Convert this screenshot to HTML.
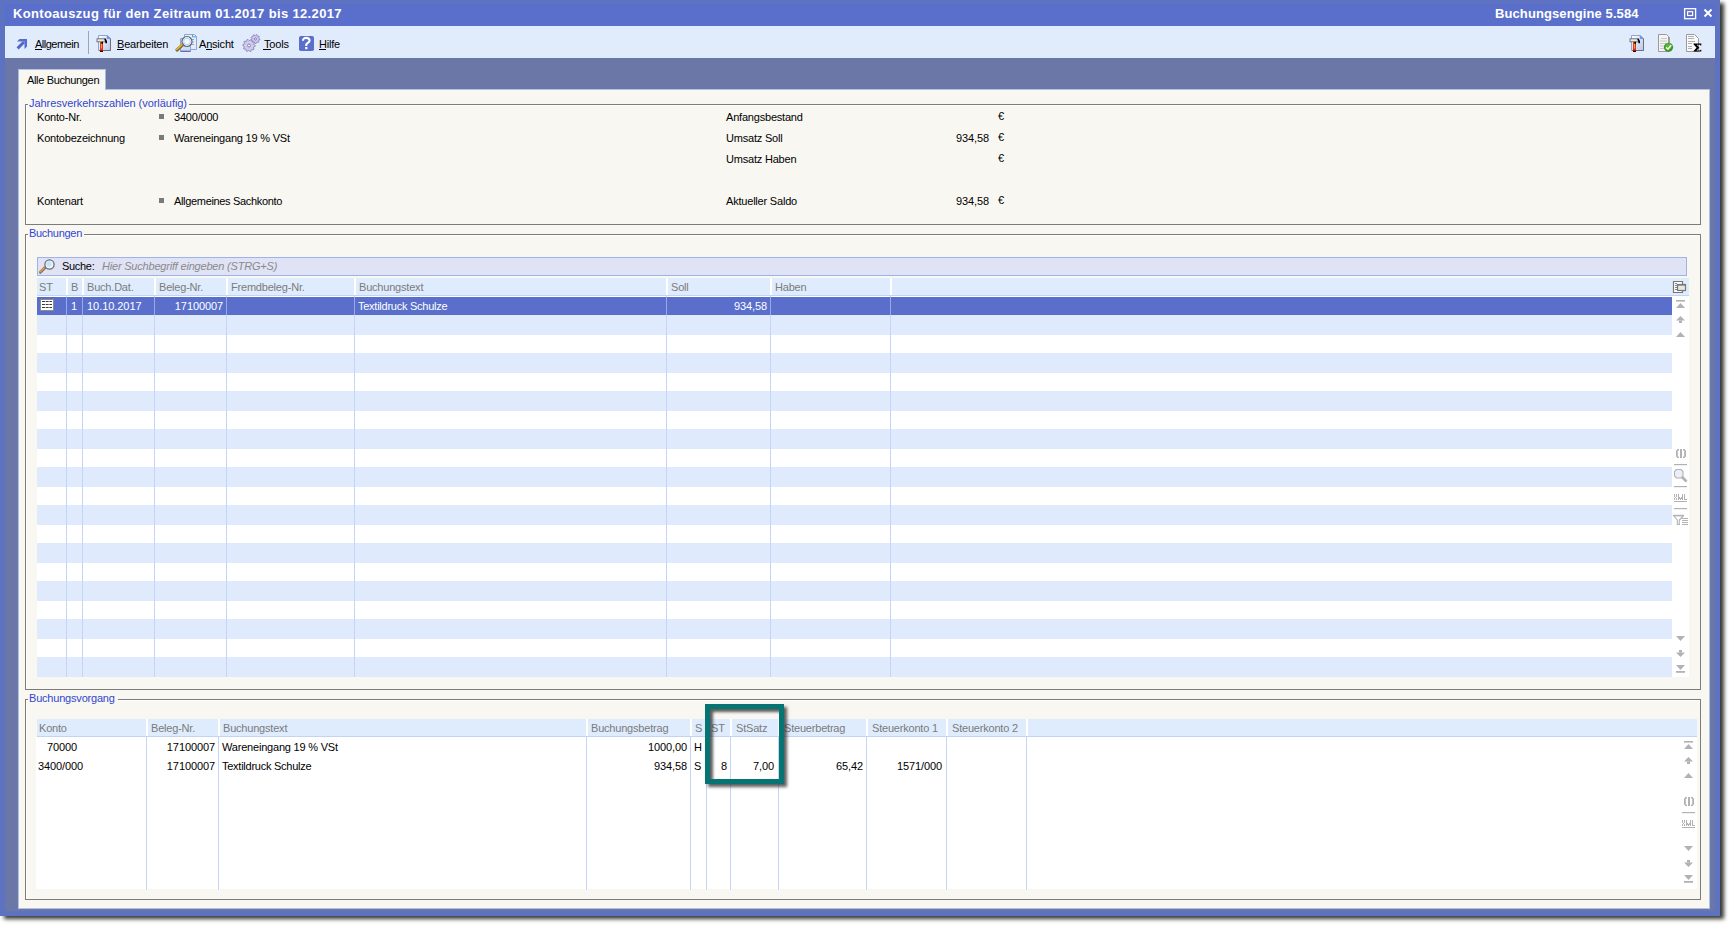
<!DOCTYPE html><html><head><meta charset="utf-8"><style>
*{margin:0;padding:0;box-sizing:border-box}
html,body{width:1730px;height:926px;overflow:hidden;background:#fff}
body{position:relative;font-family:'Liberation Sans', sans-serif;font-size:11px}
div{position:absolute}
.t{white-space:pre}
svg{position:absolute;overflow:visible}
</style></head><body><div style="left:0px;top:0px;width:1720px;height:916px;background:#5e72c2;box-shadow:4px 3px 4px rgba(20,20,15,.85)"></div>
<div style="left:5px;top:4px;width:1710px;height:22px;background:#5a6fcb"></div>
<div class="t" style="top:6px;font-size:13px;line-height:15px;color:#fff;font-weight:bold;letter-spacing:0.35px;left:13px;">Kontoauszug für den Zeitraum 01.2017 bis 12.2017</div>
<div class="t" style="top:6px;font-size:13px;line-height:15px;color:#fff;font-weight:bold;letter-spacing:0.1px;left:1495px;">Buchungsengine 5.584</div>
<svg style="left:1683px;top:8px" width="14" height="12"><rect x="1.6" y="0.7" width="11" height="10" fill="none" stroke="#fff" stroke-width="1.3"/><rect x="4.6" y="3.7" width="5" height="3.8" fill="none" stroke="#fff" stroke-width="1.2"/></svg>
<svg style="left:1703px;top:8px" width="10" height="10"><path d="M1.5 1.5 L8.5 8.5 M8.5 1.5 L1.5 8.5" stroke="#fff" stroke-width="1.9"/></svg>
<div style="left:5px;top:26px;width:1710px;height:32px;background:#e0ebfc"></div>
<div style="left:5px;top:58px;width:1710px;height:853px;background:#6a77a7"></div>
<svg style="left:14px;top:36px" width="16" height="16"><path d="M3.6 12.4 L10 6" stroke="#5068cc" stroke-width="2.9"/><path d="M3 5.5 L5.5 3 L13 3 L13 10.5 L10.5 13 L10.5 5.5 Z" fill="#566ccc"/></svg>
<div class="t" style="top:38px;font-size:11px;line-height:13px;color:#000;letter-spacing:-0.5px;left:35px;">Allgemein</div>
<div style="left:35px;top:49px;width:7px;height:1px;background:#000"></div>
<div style="left:88px;top:31px;width:1px;height:23px;background:#a0a4b0"></div>
<svg style="left:97px;top:35px" width="16" height="18">
<defs><linearGradient id="dg97" x1="0" y1="0" x2="1" y2="1"><stop offset="0" stop-color="#ffffff"/><stop offset="1" stop-color="#b8c4f0"/></linearGradient></defs>
<path d="M1.5 0.5 H10.5 L13.5 3.5 V15.5 H1.5 Z" fill="url(#dg97)" stroke="#8fa2dc" stroke-width="1"/>
<path d="M13.5 3.5 V15.5 H2" fill="none" stroke="#707070" stroke-width="1"/>
<path d="M10.2 0.8 L10.2 3.6 L13.4 3.6" fill="#5f8ee8" stroke="#5f8ee8" stroke-width="0.8"/>
<rect x="0" y="3.8" width="8.6" height="3" fill="#e8e8e8" stroke="#6c6c6c" stroke-width="0.9"/>
<path d="M7.5 4.2 Q9.3 4.5 9.3 8.2" stroke="#000" stroke-width="1.6" fill="none"/>
<rect x="3" y="7" width="3" height="9.8" fill="#e0300a"/>
<rect x="3.9" y="8.5" width="0.9" height="5" fill="#f0c040"/>
<rect x="4.5" y="6.8" width="1.5" height="2" fill="#000"/>
<rect x="3" y="15.6" width="3" height="1.4" fill="#300"/>
</svg>
<div class="t" style="top:38px;font-size:11px;line-height:13px;color:#000;letter-spacing:-0.2px;left:117px;">Bearbeiten</div>
<div style="left:117px;top:49px;width:7px;height:1px;background:#000"></div>
<svg style="left:175px;top:33px" width="24" height="20">
<path d="M9.5 1.5 H19.5 L21.5 3.5 V16.5 H9.5 Z" fill="#e4ecfa" stroke="#8ea6d8" stroke-width="1"/>
<path d="M17.5 1.8 L17.5 3.8 L21.2 3.8" fill="none" stroke="#4aa0c0" stroke-width="1"/>
<path d="M15 6.5 H19 M15 9 H19 M15 11.5 H19" stroke="#8ea6d8" stroke-width="1"/>
<path d="M5.5 5.5 H15.5 V18.3 H5.5 Z" fill="#cfdcf6" stroke="#8ea6d8" stroke-width="1"/>
<path d="M5.5 18.3 H15.5" stroke="#6a64a0" stroke-width="1.2"/>
<circle cx="12" cy="8.5" r="5" fill="#f4f8ff" stroke="#5e6a78" stroke-width="1.2"/>
<circle cx="12" cy="8.5" r="3.3" fill="none" stroke="#b8cdf0" stroke-width="1"/>
<path d="M2 17 L7.5 11.8" stroke="#6a6a50" stroke-width="3.2" stroke-linecap="round"/>
<path d="M1.8 16.4 L6.8 11.6" stroke="#f0b020" stroke-width="1.8" stroke-linecap="round"/>
</svg>
<div class="t" style="top:38px;font-size:11px;line-height:13px;color:#000;letter-spacing:-0.2px;left:199px;">Ansicht</div>
<div style="left:206px;top:49px;width:6px;height:1px;background:#000"></div>
<svg style="left:242px;top:34px" width="20" height="18"><polygon points="17.90,5.00 17.83,5.78 16.78,6.23 16.52,6.80 16.85,7.89 16.29,8.45 15.20,8.12 14.63,8.38 14.18,9.43 13.40,9.50 12.77,8.55 12.17,8.38 11.15,8.90 10.51,8.45 10.64,7.31 10.28,6.80 9.17,6.54 8.97,5.78 9.80,5.00 9.85,4.37 9.17,3.46 9.50,2.75 10.64,2.69 11.09,2.24 11.15,1.10 11.86,0.77 12.77,1.45 13.40,1.40 14.18,0.57 14.94,0.77 15.20,1.88 15.71,2.24 16.85,2.11 17.30,2.75 16.78,3.77 16.95,4.37" fill="#ccc8e8" stroke="#8078b8" stroke-width="0.8"/><circle cx="13.4" cy="5" r="1.08" fill="#f4f4ff" stroke="#8078b8" stroke-width="0.9"/><polygon points="13.20,11.50 13.12,12.47 11.72,13.03 11.42,13.75 12.02,15.14 11.38,15.88 9.92,15.51 9.25,15.92 8.92,17.40 7.97,17.62 7.00,16.46 6.22,16.40 5.08,17.40 4.19,17.02 4.08,15.51 3.49,15.01 1.98,15.14 1.48,14.31 2.28,13.03 2.10,12.28 0.80,11.50 0.88,10.53 2.28,9.97 2.58,9.25 1.98,7.86 2.62,7.12 4.08,7.49 4.75,7.08 5.08,5.60 6.03,5.38 7.00,6.54 7.78,6.60 8.92,5.60 9.81,5.98 9.92,7.49 10.51,7.99 12.02,7.86 12.52,8.69 11.72,9.97 11.90,10.72" fill="#d0cce8" stroke="#8078b8" stroke-width="0.8"/><circle cx="7" cy="11.5" r="1.49" fill="#f4f4ff" stroke="#8078b8" stroke-width="0.9"/></svg>
<div class="t" style="top:38px;font-size:11px;line-height:13px;color:#000;letter-spacing:-0.2px;left:264px;">Tools</div>
<div style="left:263px;top:49px;width:8px;height:1px;background:#000"></div>
<svg style="left:299px;top:36px" width="15" height="15"><rect x="0" y="0" width="15" height="15" rx="1.8" fill="#5a6fcc"/><path d="M4 4.8 C4 2.6 5.4 1.9 7.3 1.9 C9.4 1.9 10.6 3 10.6 4.6 C10.6 6.6 8.1 6.9 7.3 8.4 V10" fill="none" stroke="#fff" stroke-width="2.1"/><rect x="6.2" y="11" width="2.2" height="2.2" fill="#fff"/></svg>
<div class="t" style="top:38px;font-size:11px;line-height:13px;color:#000;letter-spacing:-0.2px;left:319px;">Hilfe</div>
<div style="left:319px;top:49px;width:7px;height:1px;background:#000"></div>
<svg style="left:1630px;top:35px" width="16" height="18">
<defs><linearGradient id="dg1630" x1="0" y1="0" x2="1" y2="1"><stop offset="0" stop-color="#ffffff"/><stop offset="1" stop-color="#b8c4f0"/></linearGradient></defs>
<path d="M1.5 0.5 H10.5 L13.5 3.5 V15.5 H1.5 Z" fill="url(#dg1630)" stroke="#8fa2dc" stroke-width="1"/>
<path d="M13.5 3.5 V15.5 H2" fill="none" stroke="#707070" stroke-width="1"/>
<path d="M10.2 0.8 L10.2 3.6 L13.4 3.6" fill="#5f8ee8" stroke="#5f8ee8" stroke-width="0.8"/>
<rect x="0" y="3.8" width="8.6" height="3" fill="#e8e8e8" stroke="#6c6c6c" stroke-width="0.9"/>
<path d="M7.5 4.2 Q9.3 4.5 9.3 8.2" stroke="#000" stroke-width="1.6" fill="none"/>
<rect x="3" y="7" width="3" height="9.8" fill="#e0300a"/>
<rect x="3.9" y="8.5" width="0.9" height="5" fill="#f0c040"/>
<rect x="4.5" y="6.8" width="1.5" height="2" fill="#000"/>
<rect x="3" y="15.6" width="3" height="1.4" fill="#300"/>
</svg>
<svg style="left:1657px;top:34px" width="18" height="19">
<path d="M1.5 0.5 H9.5 L11.5 2.5 V17.5 H1.5 Z" fill="#f4f4f4" stroke="#9a9a9a" stroke-width="1"/>
<path d="M12.5 3 V14" stroke="#a0a0a0" stroke-width="1"/>
<path d="M4 4.5 H10 M3 7 H10 M3 9.5 H9 M3 12 H8 M3 14.5 H8" stroke="#c8c8c8" stroke-width="1.2"/>
<circle cx="11.5" cy="13.3" r="4.6" fill="#3a9a20"/>
<circle cx="11.5" cy="12.3" r="3" fill="#66c040" opacity=".7"/>
<path d="M9 13.4 L10.9 15.2 L14.2 11.2" stroke="#fff" stroke-width="1.5" fill="none"/>
</svg>
<svg style="left:1685px;top:34px" width="19" height="19">
<path d="M1.5 0.5 H9.5 L13.5 4.5 V17.5 H1.5 Z" fill="#fafafa" stroke="#9a9a9a" stroke-width="1"/>
<path d="M3 2.5 H9 M3 4.5 H9 M3 7.5 H10 M3 9.5 H7 M3 12.5 H7 M3 14.5 H7" stroke="#b0b0b0" stroke-width="1"/>
<path d="M8.5 9.5 H16.3 V11.5 H15.5 L15 10.8 H11.8 L14.3 13.8 L11.5 16.6 H15 L15.5 15.8 H16.3 V17.6 H8.5 V16.9 L11.6 13.8 L8.5 10.3 Z" fill="#000"/>
</svg>
<div style="left:18px;top:89px;width:1692px;height:820px;background:#f8f7f2;border:1px solid #b0c2e6"></div>
<div style="left:18px;top:69px;width:88px;height:21px;background:#f8f7f2;border-top:1px solid #b6c4e4;border-left:1px solid #a8bade;border-right:1px solid #a8bade"></div>
<div class="t" style="top:74px;font-size:11px;line-height:13px;color:#000;letter-spacing:-0.35px;left:27px;">Alle Buchungen</div>
<div style="left:25px;top:104px;width:1676px;height:121px;border:1px solid #7c7c7c"></div>
<div style="left:26px;top:105px;width:1674px;height:119px;border-left:1px solid #fff;border-top:1px solid #fff"></div>
<div style="left:28px;top:96px;width:161px;height:14px;background:#f8f7f2"></div>
<div class="t" style="top:97px;font-size:11px;line-height:13px;color:#3246d0;letter-spacing:-0.05px;left:29px;">Jahresverkehrszahlen (vorläufig)</div>
<div style="left:25px;top:234px;width:1676px;height:456px;border:1px solid #7c7c7c"></div>
<div style="left:26px;top:235px;width:1674px;height:454px;border-left:1px solid #fff;border-top:1px solid #fff"></div>
<div style="left:28px;top:226px;width:56px;height:14px;background:#f8f7f2"></div>
<div class="t" style="top:227px;font-size:11px;line-height:13px;color:#3246d0;letter-spacing:-0.3px;left:29px;">Buchungen</div>
<div style="left:25px;top:699px;width:1676px;height:201px;border:1px solid #7c7c7c"></div>
<div style="left:26px;top:700px;width:1674px;height:199px;border-left:1px solid #fff;border-top:1px solid #fff"></div>
<div style="left:28px;top:691px;width:90px;height:14px;background:#f8f7f2"></div>
<div class="t" style="top:692px;font-size:11px;line-height:13px;color:#3246d0;letter-spacing:-0.2px;left:29px;">Buchungsvorgang</div>
<div class="t" style="top:111px;font-size:11px;line-height:13px;color:#000;letter-spacing:-0.2px;left:37px;">Konto-Nr.</div>
<div style="left:159px;top:114px;width:5px;height:5px;background:#7a7a7a"></div>
<div class="t" style="top:111px;font-size:11px;line-height:13px;color:#000;letter-spacing:-0.2px;left:174px;">3400/000</div>
<div class="t" style="top:132px;font-size:11px;line-height:13px;color:#000;letter-spacing:-0.2px;left:37px;">Kontobezeichnung</div>
<div style="left:159px;top:135px;width:5px;height:5px;background:#7a7a7a"></div>
<div class="t" style="top:132px;font-size:11px;line-height:13px;color:#000;letter-spacing:-0.2px;left:174px;">Wareneingang 19 % VSt</div>
<div class="t" style="top:195px;font-size:11px;line-height:13px;color:#000;letter-spacing:-0.2px;left:37px;">Kontenart</div>
<div style="left:159px;top:198px;width:5px;height:5px;background:#7a7a7a"></div>
<div class="t" style="top:195px;font-size:11px;line-height:13px;color:#000;letter-spacing:-0.33px;left:174px;">Allgemeines Sachkonto</div>
<div class="t" style="top:111px;font-size:11px;line-height:13px;color:#000;letter-spacing:-0.2px;left:726px;">Anfangsbestand</div>
<div class="t" style="top:110px;font-size:11px;line-height:13px;color:#000;left:998px;">€</div>
<div class="t" style="top:132px;font-size:11px;line-height:13px;color:#000;letter-spacing:-0.2px;left:726px;">Umsatz Soll</div>
<div class="t" style="top:132px;font-size:11px;line-height:13px;color:#000;letter-spacing:-0.1px;right:741px;text-align:right;">934,58</div>
<div class="t" style="top:131px;font-size:11px;line-height:13px;color:#000;left:998px;">€</div>
<div class="t" style="top:153px;font-size:11px;line-height:13px;color:#000;letter-spacing:-0.2px;left:726px;">Umsatz Haben</div>
<div class="t" style="top:152px;font-size:11px;line-height:13px;color:#000;left:998px;">€</div>
<div class="t" style="top:195px;font-size:11px;line-height:13px;color:#000;letter-spacing:-0.2px;left:726px;">Aktueller Saldo</div>
<div class="t" style="top:195px;font-size:11px;line-height:13px;color:#000;letter-spacing:-0.1px;right:741px;text-align:right;">934,58</div>
<div class="t" style="top:194px;font-size:11px;line-height:13px;color:#000;left:998px;">€</div>
<div style="left:37px;top:257px;width:1650px;height:19px;background:#dfe3f5;border:1px solid #9db4ea"></div>
<svg style="left:38px;top:258px" width="16" height="17">
<path d="M2.3 14.3 L6.8 9.8" stroke="#707070" stroke-width="3" stroke-linecap="round"/>
<path d="M2 14 L6.2 9.8" stroke="#f0a020" stroke-width="1.6" stroke-linecap="round"/>
<circle cx="11.5" cy="6.5" r="4.6" fill="#e8f4ff" stroke="#6e6e78" stroke-width="1.3"/>
<circle cx="11" cy="5.8" r="2.6" fill="#c6e4f8"/>
</svg>
<div class="t" style="top:260px;font-size:11px;line-height:13px;color:#000;letter-spacing:-0.3px;left:62px;">Suche:</div>
<div class="t" style="top:260px;font-size:11px;line-height:13px;color:#8a8a8a;font-style:italic;letter-spacing:-0.2px;left:102px;">Hier Suchbegriff eingeben (STRG+S)</div>
<div style="left:37px;top:278px;width:1652px;height:18px;background:#dfecfd;border-bottom:1px solid #c2d4f2"></div>
<div style="left:66px;top:278px;width:2px;height:17px;background:#fff"></div>
<div style="left:82px;top:278px;width:2px;height:17px;background:#fff"></div>
<div style="left:154px;top:278px;width:2px;height:17px;background:#fff"></div>
<div style="left:226px;top:278px;width:2px;height:17px;background:#fff"></div>
<div style="left:354px;top:278px;width:2px;height:17px;background:#fff"></div>
<div style="left:666px;top:278px;width:2px;height:17px;background:#fff"></div>
<div style="left:770px;top:278px;width:2px;height:17px;background:#fff"></div>
<div style="left:890px;top:278px;width:2px;height:17px;background:#fff"></div>
<div class="t" style="top:281px;font-size:11px;line-height:13px;color:#7b7b7b;letter-spacing:-0.2px;left:39px;">ST</div>
<div class="t" style="top:281px;font-size:11px;line-height:13px;color:#7b7b7b;letter-spacing:-0.2px;left:71px;">B</div>
<div class="t" style="top:281px;font-size:11px;line-height:13px;color:#7b7b7b;letter-spacing:-0.2px;left:87px;">Buch.Dat.</div>
<div class="t" style="top:281px;font-size:11px;line-height:13px;color:#7b7b7b;letter-spacing:-0.2px;left:159px;">Beleg-Nr.</div>
<div class="t" style="top:281px;font-size:11px;line-height:13px;color:#7b7b7b;letter-spacing:-0.2px;left:231px;">Fremdbeleg-Nr.</div>
<div class="t" style="top:281px;font-size:11px;line-height:13px;color:#7b7b7b;letter-spacing:-0.2px;left:359px;">Buchungstext</div>
<div class="t" style="top:281px;font-size:11px;line-height:13px;color:#7b7b7b;letter-spacing:-0.2px;left:671px;">Soll</div>
<div class="t" style="top:281px;font-size:11px;line-height:13px;color:#7b7b7b;letter-spacing:-0.2px;left:775px;">Haben</div>
<svg style="left:1672px;top:280px" width="15" height="14">
<path d="M1.5 1.5 H10.5 V12.5 H1.5 Z" fill="#fff" stroke="#777" stroke-width="1.2"/>
<path d="M3 3.5 H5 M3 5.5 H5 M3 7.5 H5 M3 9.5 H5" stroke="#777" stroke-width="0.9"/>
<rect x="5.5" y="4.5" width="8" height="6" fill="#e6e6e2" stroke="#777" stroke-width="1.2"/>
<rect x="5.5" y="4" width="8" height="1.6" fill="#777"/>
</svg>
<div style="left:37px;top:296px;width:1652px;height:381px;background:#fff"></div>
<div style="left:37px;top:315px;width:1635px;height:20px;background:#dfebfd"></div>
<div style="left:37px;top:353px;width:1635px;height:20px;background:#dfebfd"></div>
<div style="left:37px;top:391px;width:1635px;height:20px;background:#dfebfd"></div>
<div style="left:37px;top:429px;width:1635px;height:20px;background:#dfebfd"></div>
<div style="left:37px;top:467px;width:1635px;height:20px;background:#dfebfd"></div>
<div style="left:37px;top:505px;width:1635px;height:20px;background:#dfebfd"></div>
<div style="left:37px;top:543px;width:1635px;height:20px;background:#dfebfd"></div>
<div style="left:37px;top:581px;width:1635px;height:20px;background:#dfebfd"></div>
<div style="left:37px;top:619px;width:1635px;height:20px;background:#dfebfd"></div>
<div style="left:37px;top:657px;width:1635px;height:20px;background:#dfebfd"></div>
<div style="left:37px;top:297px;width:1635px;height:18px;background:#5a6fcc"></div>
<div style="left:66px;top:296px;width:1px;height:381px;background:#c4d5f8"></div>
<div style="left:82px;top:296px;width:1px;height:381px;background:#c4d5f8"></div>
<div style="left:154px;top:296px;width:1px;height:381px;background:#c4d5f8"></div>
<div style="left:226px;top:296px;width:1px;height:381px;background:#c4d5f8"></div>
<div style="left:354px;top:296px;width:1px;height:381px;background:#c4d5f8"></div>
<div style="left:666px;top:296px;width:1px;height:381px;background:#c4d5f8"></div>
<div style="left:770px;top:296px;width:1px;height:381px;background:#c4d5f8"></div>
<div style="left:890px;top:296px;width:1px;height:381px;background:#c4d5f8"></div>
<div style="left:66px;top:297px;width:1px;height:18px;background:#9aaae4"></div>
<div style="left:82px;top:297px;width:1px;height:18px;background:#9aaae4"></div>
<div style="left:154px;top:297px;width:1px;height:18px;background:#9aaae4"></div>
<div style="left:226px;top:297px;width:1px;height:18px;background:#9aaae4"></div>
<div style="left:354px;top:297px;width:1px;height:18px;background:#9aaae4"></div>
<div style="left:666px;top:297px;width:1px;height:18px;background:#9aaae4"></div>
<div style="left:770px;top:297px;width:1px;height:18px;background:#9aaae4"></div>
<div style="left:890px;top:297px;width:1px;height:18px;background:#9aaae4"></div>
<svg style="left:40px;top:299px" width="14" height="12">
<rect x="0.5" y="0.5" width="13" height="11" fill="#fff" stroke="#8c8c8c" stroke-width="1"/>
<path d="M2 2.5 H12 M2 5.5 H12 M2 8.5 H12" stroke="#3a3a3a" stroke-width="1" stroke-dasharray="3 0.7"/>
</svg>
<div class="t" style="top:300px;font-size:11px;line-height:13px;color:#fff;left:71px;">1</div>
<div class="t" style="top:300px;font-size:11px;line-height:13px;color:#fff;letter-spacing:-0.05px;left:87px;">10.10.2017</div>
<div class="t" style="top:300px;font-size:11px;line-height:13px;color:#fff;letter-spacing:-0.1px;right:1507px;text-align:right;">17100007</div>
<div class="t" style="top:300px;font-size:11px;line-height:13px;color:#fff;letter-spacing:-0.25px;left:358px;">Textildruck Schulze</div>
<div class="t" style="top:300px;font-size:11px;line-height:13px;color:#fff;letter-spacing:-0.1px;right:963px;text-align:right;">934,58</div>
<div style="left:36px;top:737px;width:1661px;height:152px;background:#fff"></div>
<div style="left:37px;top:719px;width:1660px;height:18px;background:#dfecfd;border-bottom:1px solid #c2d4f2"></div>
<div style="left:146px;top:719px;width:2px;height:17px;background:#fff"></div>
<div style="left:146px;top:737px;width:1px;height:153px;background:#c4d5f8"></div>
<div style="left:218px;top:719px;width:2px;height:17px;background:#fff"></div>
<div style="left:218px;top:737px;width:1px;height:153px;background:#c4d5f8"></div>
<div style="left:586px;top:719px;width:2px;height:17px;background:#fff"></div>
<div style="left:586px;top:737px;width:1px;height:153px;background:#c4d5f8"></div>
<div style="left:690px;top:719px;width:2px;height:17px;background:#fff"></div>
<div style="left:690px;top:737px;width:1px;height:153px;background:#c4d5f8"></div>
<div style="left:706px;top:719px;width:2px;height:17px;background:#fff"></div>
<div style="left:706px;top:737px;width:1px;height:153px;background:#c4d5f8"></div>
<div style="left:730px;top:719px;width:2px;height:17px;background:#fff"></div>
<div style="left:730px;top:737px;width:1px;height:153px;background:#c4d5f8"></div>
<div style="left:778px;top:719px;width:2px;height:17px;background:#fff"></div>
<div style="left:778px;top:737px;width:1px;height:153px;background:#c4d5f8"></div>
<div style="left:866px;top:719px;width:2px;height:17px;background:#fff"></div>
<div style="left:866px;top:737px;width:1px;height:153px;background:#c4d5f8"></div>
<div style="left:946px;top:719px;width:2px;height:17px;background:#fff"></div>
<div style="left:946px;top:737px;width:1px;height:153px;background:#c4d5f8"></div>
<div style="left:1026px;top:719px;width:2px;height:17px;background:#fff"></div>
<div style="left:1026px;top:737px;width:1px;height:153px;background:#c4d5f8"></div>
<div class="t" style="top:722px;font-size:11px;line-height:13px;color:#7b7b7b;letter-spacing:-0.2px;left:39px;">Konto</div>
<div class="t" style="top:722px;font-size:11px;line-height:13px;color:#7b7b7b;letter-spacing:-0.2px;left:151px;">Beleg-Nr.</div>
<div class="t" style="top:722px;font-size:11px;line-height:13px;color:#7b7b7b;letter-spacing:-0.2px;left:223px;">Buchungstext</div>
<div class="t" style="top:722px;font-size:11px;line-height:13px;color:#7b7b7b;letter-spacing:-0.2px;left:591px;">Buchungsbetrag</div>
<div class="t" style="top:722px;font-size:11px;line-height:13px;color:#7b7b7b;letter-spacing:-0.2px;left:695px;">S</div>
<div class="t" style="top:722px;font-size:11px;line-height:13px;color:#7b7b7b;letter-spacing:-0.2px;left:711px;">ST</div>
<div class="t" style="top:722px;font-size:11px;line-height:13px;color:#7b7b7b;letter-spacing:-0.2px;left:736px;">StSatz</div>
<div class="t" style="top:722px;font-size:11px;line-height:13px;color:#7b7b7b;letter-spacing:-0.2px;left:784px;">Steuerbetrag</div>
<div class="t" style="top:722px;font-size:11px;line-height:13px;color:#7b7b7b;letter-spacing:-0.2px;left:872px;">Steuerkonto 1</div>
<div class="t" style="top:722px;font-size:11px;line-height:13px;color:#7b7b7b;letter-spacing:-0.2px;left:952px;">Steuerkonto 2</div>
<div class="t" style="top:741px;font-size:11px;line-height:13px;color:#000;letter-spacing:-0.1px;left:47px;">70000</div>
<div class="t" style="top:741px;font-size:11px;line-height:13px;color:#000;letter-spacing:-0.1px;right:1515px;text-align:right;">17100007</div>
<div class="t" style="top:741px;font-size:11px;line-height:13px;color:#000;letter-spacing:-0.2px;left:222px;">Wareneingang 19 % VSt</div>
<div class="t" style="top:741px;font-size:11px;line-height:13px;color:#000;letter-spacing:-0.1px;right:1043px;text-align:right;">1000,00</div>
<div class="t" style="top:741px;font-size:11px;line-height:13px;color:#000;left:694px;">H</div>
<div class="t" style="top:760px;font-size:11px;line-height:13px;color:#000;letter-spacing:-0.1px;left:38px;">3400/000</div>
<div class="t" style="top:760px;font-size:11px;line-height:13px;color:#000;letter-spacing:-0.1px;right:1515px;text-align:right;">17100007</div>
<div class="t" style="top:760px;font-size:11px;line-height:13px;color:#000;letter-spacing:-0.25px;left:222px;">Textildruck Schulze</div>
<div class="t" style="top:760px;font-size:11px;line-height:13px;color:#000;letter-spacing:-0.1px;right:1043px;text-align:right;">934,58</div>
<div class="t" style="top:760px;font-size:11px;line-height:13px;color:#000;left:694px;">S</div>
<div class="t" style="top:760px;font-size:11px;line-height:13px;color:#000;right:1003px;text-align:right;">8</div>
<div class="t" style="top:760px;font-size:11px;line-height:13px;color:#000;letter-spacing:-0.1px;right:956px;text-align:right;">7,00</div>
<div class="t" style="top:760px;font-size:11px;line-height:13px;color:#000;letter-spacing:-0.1px;right:867px;text-align:right;">65,42</div>
<div class="t" style="top:760px;font-size:11px;line-height:13px;color:#000;letter-spacing:-0.1px;right:788px;text-align:right;">1571/000</div>
<svg style="left:0;top:0" width="1730" height="926"><rect x="1676" y="300" width="9" height="1.6" fill="#b2b2b2"/><path d="M1676 308 L1680.5 303 L1685 308 Z" fill="#b2b2b2"/><path d="M1676 320.5 L1680.5 316 L1685 320.5 Z" fill="#b2b2b2"/><rect x="1679" y="320.5" width="3" height="2.5" fill="#b2b2b2"/><path d="M1676 337 L1680.5 332 L1685 337 Z" fill="#b2b2b2"/><rect x="1676" y="450.2" width="1.8" height="6.6" fill="#b2b2b2"/><rect x="1677" y="449" width="2" height="1.5" fill="#b2b2b2"/><rect x="1677" y="456.5" width="2" height="1.5" fill="#b2b2b2"/><rect x="1680" y="449" width="2" height="9" fill="#b2b2b2"/><rect x="1684.2" y="450.2" width="1.8" height="6.6" fill="#b2b2b2"/><rect x="1683" y="449" width="2" height="1.5" fill="#b2b2b2"/><rect x="1683" y="456.5" width="2" height="1.5" fill="#b2b2b2"/><rect x="1674" y="464" width="13" height="1.2" fill="#b2b2b2"/><path d="M1676.5 469.5 H1681 L1683 471.5 V476 L1681 478 H1676.5 L1674.5 476 V471.5 Z" fill="#eeeefa" stroke="#b2b2b2" stroke-width="1.1"/><path d="M1682 477 L1686.5 481.5" stroke="#b2b2b2" stroke-width="2.6"/><rect x="1674" y="486" width="13" height="1.2" fill="#b2b2b2"/><rect x="1674" y="494" width="1" height="3" fill="#b2b2b2"/><rect x="1676" y="494" width="1" height="3" fill="#b2b2b2"/><rect x="1675" y="497" width="1" height="1" fill="#b2b2b2"/><rect x="1674" y="498" width="1" height="2" fill="#b2b2b2"/><rect x="1676" y="498" width="1" height="2" fill="#b2b2b2"/><rect x="1678" y="494" width="1" height="6" fill="#b2b2b2"/><rect x="1682" y="494" width="1" height="6" fill="#b2b2b2"/><rect x="1679" y="497" width="1" height="2" fill="#b2b2b2"/><rect x="1680" y="498" width="1" height="2" fill="#b2b2b2"/><rect x="1681" y="497" width="1" height="2" fill="#b2b2b2"/><rect x="1684" y="494" width="1" height="6" fill="#b2b2b2"/><rect x="1684" y="499" width="3" height="1" fill="#b2b2b2"/><rect x="1674" y="501" width="13" height="1" fill="#b2b2b2"/><rect x="1674" y="508" width="13" height="1.2" fill="#b2b2b2"/><rect x="1673" y="514.8" width="11" height="1.6" fill="#b2b2b2"/><path d="M1673.8 516 L1677.3 520 V524.5 H1679.3 V520 L1683.2 516" fill="none" stroke="#b2b2b2" stroke-width="1.1"/><path d="M1682 518.5 H1688 M1682 520.5 H1688 M1682 522.5 H1688 M1682 524.5 H1688" stroke="#b2b2b2" stroke-width="1"/><path d="M1676 636 L1680.5 641 L1685 636 Z" fill="#b2b2b2"/><rect x="1679" y="650" width="3" height="2.5" fill="#b2b2b2"/><path d="M1676 652.5 L1680.5 657 L1685 652.5 Z" fill="#b2b2b2"/><path d="M1676 665 L1680.5 670 L1685 665 Z" fill="#b2b2b2"/><rect x="1676" y="671" width="9" height="1.8" fill="#b2b2b2"/><rect x="1684" y="741" width="9" height="1.6" fill="#b2b2b2"/><path d="M1684 749 L1688.5 744 L1693 749 Z" fill="#b2b2b2"/><path d="M1684 761.5 L1688.5 757 L1693 761.5 Z" fill="#b2b2b2"/><rect x="1687" y="761.5" width="3" height="2.5" fill="#b2b2b2"/><path d="M1684 778 L1688.5 773 L1693 778 Z" fill="#b2b2b2"/><rect x="1684" y="798.2" width="1.8" height="6.6" fill="#b2b2b2"/><rect x="1685" y="797" width="2" height="1.5" fill="#b2b2b2"/><rect x="1685" y="804.5" width="2" height="1.5" fill="#b2b2b2"/><rect x="1688" y="797" width="2" height="9" fill="#b2b2b2"/><rect x="1692.2" y="798.2" width="1.8" height="6.6" fill="#b2b2b2"/><rect x="1691" y="797" width="2" height="1.5" fill="#b2b2b2"/><rect x="1691" y="804.5" width="2" height="1.5" fill="#b2b2b2"/><rect x="1682" y="812" width="13" height="1.2" fill="#b2b2b2"/><rect x="1682" y="820" width="1" height="3" fill="#b2b2b2"/><rect x="1684" y="820" width="1" height="3" fill="#b2b2b2"/><rect x="1683" y="823" width="1" height="1" fill="#b2b2b2"/><rect x="1682" y="824" width="1" height="2" fill="#b2b2b2"/><rect x="1684" y="824" width="1" height="2" fill="#b2b2b2"/><rect x="1686" y="820" width="1" height="6" fill="#b2b2b2"/><rect x="1690" y="820" width="1" height="6" fill="#b2b2b2"/><rect x="1687" y="823" width="1" height="2" fill="#b2b2b2"/><rect x="1688" y="824" width="1" height="2" fill="#b2b2b2"/><rect x="1689" y="823" width="1" height="2" fill="#b2b2b2"/><rect x="1692" y="820" width="1" height="6" fill="#b2b2b2"/><rect x="1692" y="825" width="3" height="1" fill="#b2b2b2"/><rect x="1682" y="827" width="13" height="1" fill="#b2b2b2"/><path d="M1684 846 L1688.5 851 L1693 846 Z" fill="#b2b2b2"/><rect x="1687" y="860" width="3" height="2.5" fill="#b2b2b2"/><path d="M1684 862.5 L1688.5 867 L1693 862.5 Z" fill="#b2b2b2"/><path d="M1684 875 L1688.5 880 L1693 875 Z" fill="#b2b2b2"/><rect x="1684" y="881" width="9" height="1.8" fill="#b2b2b2"/></svg>
<div style="left:705px;top:704px;width:79px;height:80px;border:5px solid #077474;box-shadow:3px 3px 3px rgba(40,40,40,.75), inset 3px 3px 3px rgba(40,40,40,.75)"></div></body></html>
